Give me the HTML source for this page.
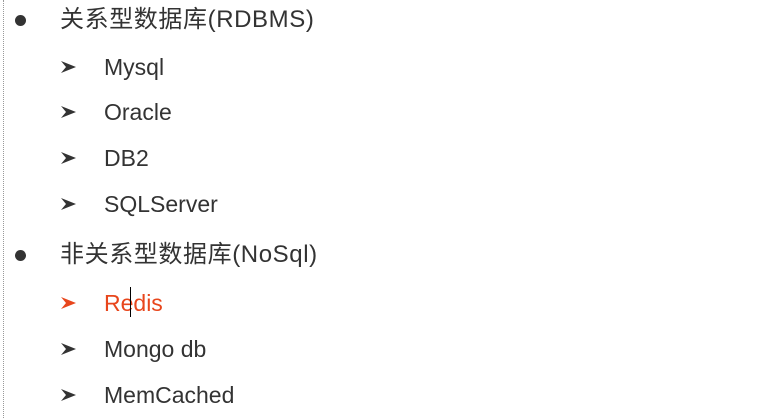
<!DOCTYPE html>
<html><head><meta charset="utf-8"><style>
body{margin:0;width:760px;height:418px;background:#fff;position:relative;overflow:hidden;font-family:"Liberation Sans","Noto Sans CJK SC",sans-serif;color:#333}
.vl{position:absolute;left:3px;top:0;height:418px;border-left:1px dotted #999}
.h{position:absolute;left:60px;font-size:24px;line-height:30px;letter-spacing:0.6px}
.b{position:absolute;left:15px;width:11px;height:11px;border-radius:50%;background:#333}
.s{position:absolute;left:104px;font-size:23px;line-height:28px}
.a{position:absolute;left:61px;width:15px;height:12px}
.r{color:#e8461c}
</style></head><body>
<div class="vl"></div>
<div class="b" style="top:15px"></div><div class="h" style="top:5px">关系型数据库(RDBMS)</div>
<div class="b" style="top:250px"></div><div class="h" style="top:240px">非关系型数据库(NoSql)</div>
<svg class="a" style="top:61px" viewBox="0 0 15 12"><path d="M0 0L15 6L0 12L5 6Z" fill="#333"/></svg><div class="s" style="top:53px">Mysql</div>
<svg class="a" style="top:106px" viewBox="0 0 15 12"><path d="M0 0L15 6L0 12L5 6Z" fill="#333"/></svg><div class="s" style="top:98px">Oracle</div>
<svg class="a" style="top:152px" viewBox="0 0 15 12"><path d="M0 0L15 6L0 12L5 6Z" fill="#333"/></svg><div class="s" style="top:144px">DB2</div>
<svg class="a" style="top:198px" viewBox="0 0 15 12"><path d="M0 0L15 6L0 12L5 6Z" fill="#333"/></svg><div class="s" style="top:190px">SQLServer</div>
<svg class="a" style="top:297px" viewBox="0 0 15 12"><path d="M0 0L15 6L0 12L5 6Z" fill="#e8461c"/></svg><div class="s r" style="top:289px">Redis</div>
<div style="position:absolute;left:130px;top:287px;width:1px;height:30px;background:#000"></div>
<svg class="a" style="top:343px" viewBox="0 0 15 12"><path d="M0 0L15 6L0 12L5 6Z" fill="#333"/></svg><div class="s" style="top:335px">Mongo db</div>
<svg class="a" style="top:389px" viewBox="0 0 15 12"><path d="M0 0L15 6L0 12L5 6Z" fill="#333"/></svg><div class="s" style="top:381px">MemCached</div>
</body></html>
